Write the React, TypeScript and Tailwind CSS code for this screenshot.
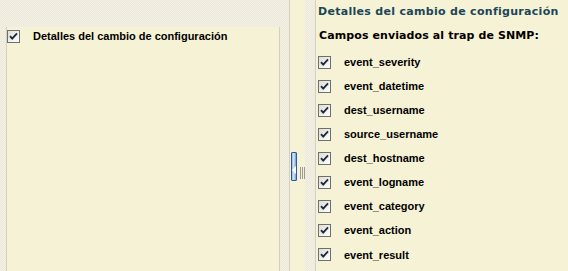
const fields = [
  'event_severity',
  'event_datetime',
  'dest_username',
  'source_username',
  'dest_hostname',
  'event_logname',
  'event_category',
  'event_action',
  'event_result',
];

function Check() {
  return (
    <svg width="13" height="13" viewBox="0 0 13 13" className="shrink-0">
      <defs>
        <linearGradient id="cb" x1="0" y1="0" x2="1" y2="1">
          <stop offset="0" stopColor="#dcdcd4" />
          <stop offset="1" stopColor="#ffffff" />
        </linearGradient>
      </defs>
      <rect x="0.5" y="0.5" width="12" height="12" fill="url(#cb)" stroke="#6f6f6f" />
      <path d="M3 6.2 L5.2 8.6 L10 3.4" fill="none" stroke="#1d2738" strokeWidth="1.8" />
    </svg>
  );
}

export default function App() {
  return (
    <div className="flex w-[568px] h-[271px] overflow-hidden bg-[repeating-conic-gradient(#ece8da_0_25%,#f4f0e4_0_50%)] bg-[length:2px_2px] font-['Liberation_Sans',Arial,sans-serif] text-[11px] text-black">
      {/* left panel */}
      <div className="w-[280px] pl-[6px] pt-[27px] shrink-0">
        <div className="h-full bg-[#f6f2d6] border-l border-r border-[#d4d0c0] pt-[3px]">
          <div className="flex items-center h-[13px]">
            <Check />
            <span className="ml-[13px] font-bold">Detalles del cambio de configuración</span>
          </div>
        </div>
      </div>

      {/* splitter */}
      <div className="ml-[9px] w-[16px] shrink-0 bg-[#f6f2d6] border-l border-[#d4d0c0] pt-[152px]">
        <div className="flex items-end gap-[3px]">
          <div className="ml-[1px] w-[6px] h-[29px] rounded-[1px] border border-[#2a5a9c] bg-[linear-gradient(90deg,#8fb6e6,#dbe9fa_45%,#6e9ad6)] flex items-center pt-[6px]">
            <div className="w-0 h-0 border-y-[4px] border-y-transparent border-r-[4px] border-r-white" />
          </div>
          <div className="flex gap-[1px] mb-[2px]">
            <div className="w-px h-[12px] bg-[#9a9a9a]" />
            <div className="w-px h-[12px] bg-[#9a9a9a]" />
            <div className="w-px h-[12px] bg-[#9a9a9a]" />
          </div>
        </div>
      </div>

      {/* right panel */}
      <div className="ml-[10px] flex-1 bg-[#f6f2d6] border-l border-[#d4d0c0] pl-[2px] font-['DejaVu_Sans',Verdana,sans-serif]">
        <div className="h-[24px] flex items-center font-bold text-[#1b4658] text-[11px] tracking-[0.3px]">
          Detalles del cambio de configuración
        </div>
        <div className="h-[24px] flex items-center font-bold text-[11px] pl-[1px] tracking-[0.1px]">
          Campos enviados al trap de SNMP:
        </div>
        <div className="pt-[2px]">
          {fields.map((f) => (
            <div key={f} className="h-[24.1px] flex items-center">
              <Check />
              <span className="ml-[13px] font-bold font-['Liberation_Sans',Arial,sans-serif]">{f}</span>
            </div>
          ))}
        </div>
      </div>
    </div>
  );
}
